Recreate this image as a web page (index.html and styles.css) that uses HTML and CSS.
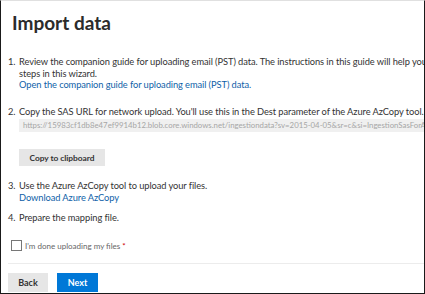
FILE: index.html
```html
<!DOCTYPE html>
<html lang="en">
<head>
    <meta charset="UTF-8">
    <title>Import data</title>
    <link rel="stylesheet" href="styles.css">
</head>
<body>
    <div class="frame">
        <h1 class="title">Import data</h1>
        <ol class="steps">
            <li class="step-guide">
                <p>Review the companion guide for uploading email (PST) data. The instructions in this guide will help you complete the<br>steps in this wizard.</p>
                <a href="#">Open the companion guide for uploading email (PST) data.</a>
            </li>
            <li class="step-url">
                <p>Copy the SAS URL for network upload. You'll use this in the Dest parameter of the Azure AzCopy tool.</p>
                <div class="url">https://15983cf1db8e47ef9914b12.blob.core.windows.net/ingestiondata?sv=2015-04-05&amp;sr=c&amp;si=IngestionSasForAzCopy</div>
                <button class="btn copy">Copy to clipboard</button>
            </li>
            <li class="step-tool">
                <p>Use the Azure AzCopy tool to upload your files.</p>
                <a href="#">Download Azure AzCopy</a>
            </li>
            <li class="step-map">
                <p>Prepare the mapping file.</p>
            </li>
        </ol>
        <label class="check">
            <span class="box"></span>
            <span>I'm done uploading my files <em>*</em></span>
        </label>
        <div class="footer">
            <button class="btn">Back</button>
            <button class="btn primary">Next</button>
        </div>
    </div>
</body>
</html>
```

FILE: styles.css
```css
* {
    margin: 0;
    padding: 0;
    box-sizing: border-box;
}
html, body {
    width: 425px;
    height: 294px;
    overflow: hidden;
    background: #fff;
}
body {
    font-family: Lato, "Noto Sans", sans-serif;
    color: #333;
}
.frame {
    width: 425px;
    height: 294px;
    border: 1px solid #1a1a1a;
    border-top-color: #e0e0e0;
    overflow: hidden;
    padding: 5px 0 0 7px;
}
.title {
    font-size: 19px;
    font-weight: 700;
    color: #2b2b2b;
    margin: 0 0 0 4px;
    line-height: 34px;
}
.steps {
    list-style: none;
    counter-reset: step;
    margin-top: 16px;
    font-size: 9.3px;
    letter-spacing: -0.08px;
    line-height: 11.5px;
    white-space: nowrap;
}
.steps li {
    counter-increment: step;
    position: relative;
    padding-left: 11px;
}
.steps li::before {
    content: counter(step) ".";
    position: absolute;
    left: 0;
    top: 0;
}
.step-guide {
    margin-bottom: 15.5px;
}
.step-url {
    margin-bottom: 14px;
}
.step-tool {
    margin-bottom: 9px;
}
.steps a {
    color: #0f5fa8;
    text-decoration: none;
}
.url {
    margin-top: 1.5px;
    height: 13px;
    line-height: 13px;
    background: #f0f0f0;
    color: #a6a6a6;
    font-size: 7.8px;
    letter-spacing: 0;
    padding-left: 4px;
    width: 420px;
}
.btn {
    font-family: inherit;
    font-size: 9px;
    font-weight: 700;
    border: none;
    height: 19px;
    padding: 0;
    background: #e6e6e6;
    color: #333;
}
.copy {
    display: block;
    margin-top: 17px;
    height: 17px;
    width: 86px;
    font-size: 8.4px;
    letter-spacing: -0.05px;
}
.check {
    display: flex;
    align-items: center;
    gap: 3px;
    height: 11px;
    font-size: 8px;
    color: #666;
    margin: 16.5px 0 0 3px;
}
.check .box {
    width: 11px;
    height: 11px;
    border: 1px solid #777;
}
.check em {
    color: #c00;
    font-style: normal;
}
.footer {
    margin-top: 12px;
    border-top: 1px solid #ececec;
    padding-top: 9px;
    display: flex;
    gap: 9px;
}
.footer .btn {
    width: 40px;
}
.primary {
    background: #0078d7;
    color: #fff;
}
.footer .primary {
    width: 41px;
}
```
